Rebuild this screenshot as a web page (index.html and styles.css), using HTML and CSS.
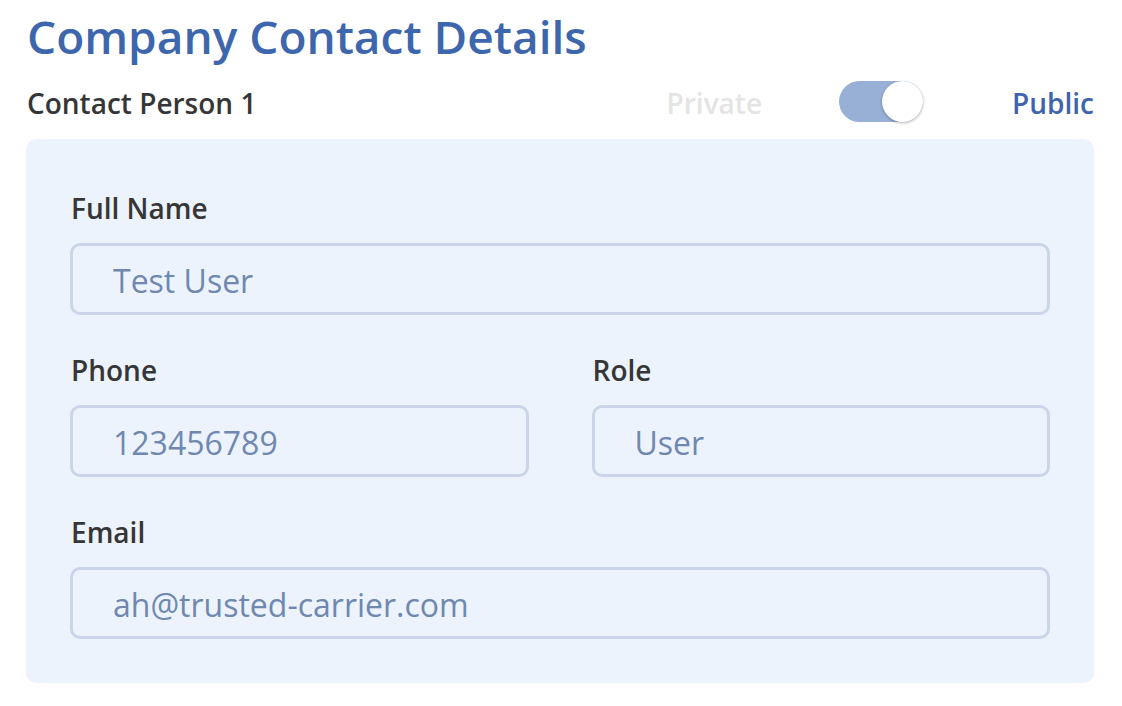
FILE: index.html
```html
<!DOCTYPE html>
<html>
<head>
<meta charset="utf-8">
<link rel="stylesheet" href="styles.css">
</head>
<body>
<div class="page">
  <h1 class="title">Company Contact Details</h1>
  <div class="person-row">
    <div class="person-name">Contact Person 1</div>
    <div class="visibility">
      <span class="vis-label vis-private">Private</span>
      <span class="toggle"><span class="knob"></span></span>
      <span class="vis-label vis-public">Public</span>
    </div>
  </div>
  <div class="card">
    <div class="field">
      <label class="field-label">Full Name</label>
      <input class="field-input" type="text" value="Test User" readonly>
    </div>
    <div class="field-row">
      <div class="field">
        <label class="field-label">Phone</label>
        <input class="field-input" type="text" value="123456789" readonly>
      </div>
      <div class="field">
        <label class="field-label">Role</label>
        <input class="field-input" type="text" value="User" readonly>
      </div>
    </div>
    <div class="field">
      <label class="field-label">Email</label>
      <input class="field-input" type="text" value="ah@trusted-carrier.com" readonly>
    </div>
  </div>
</div>
</body>
</html>
```
FILE: styles.css
```css
* { box-sizing: border-box; }
body {
  margin: 0;
  background: #ffffff;
  font-family: "Open Sans", "Noto Sans", sans-serif;
}
.page {
  width: 1068px;
  margin-left: 26px;
  padding-top: 8px;
}
.title {
  margin: 0 0 0 1px;
  font-size: 46px;
  line-height: 56px;
  font-weight: 600;
  color: #3e66ad;
}
.person-row {
  display: flex;
  align-items: center;
  justify-content: space-between;
  height: 50px;
  margin-top: 12px;
  margin-bottom: 13px;
}
.person-name {
  margin-left: 1px;
  font-size: 28px;
  font-weight: 600;
  color: #363636;
  padding-top: 3px;
}
.visibility {
  display: flex;
  align-items: center;
}
.vis-label {
  font-size: 28px;
  font-weight: 600;
  padding-top: 3px;
}
.vis-private { color: #e4e4e4; margin-right: 77px; }
.vis-public { color: #3e64ab; margin-left: 89px; }
.toggle {
  position: relative;
  display: block;
  width: 84px;
  height: 41px;
  border-radius: 21px;
  background: #98b0d6;
}
.knob {
  position: absolute;
  right: 0;
  top: 0;
  width: 41px;
  height: 41px;
  border-radius: 50%;
  background: #ffffff;
  box-shadow: 0 1px 3px rgba(0,0,0,0.3);
}
.card {
  background: #ecf3fc;
  border-radius: 10px;
  padding: 52px 44px 44px 44px;
  display: flex;
  flex-direction: column;
  gap: 38px;
}
.field-row {
  display: grid;
  grid-template-columns: 1fr 1fr;
  column-gap: 63px;
}
.field {
  display: flex;
  flex-direction: column;
}
.field-label {
  font-size: 28px;
  line-height: 34px;
  font-weight: 600;
  color: #363636;
  margin-bottom: 18px;
  margin-left: 1px;
}
.field-input {
  height: 72px;
  width: 100%;
  border: 3px solid #cbd5e9;
  border-radius: 10px;
  background: #ecf3fc;
  padding: 3px 0 0 40px;
  font-family: "Open Sans", "Noto Sans", sans-serif;
  font-size: 32px;
  color: #7088b0;
  outline: none;
}
```
